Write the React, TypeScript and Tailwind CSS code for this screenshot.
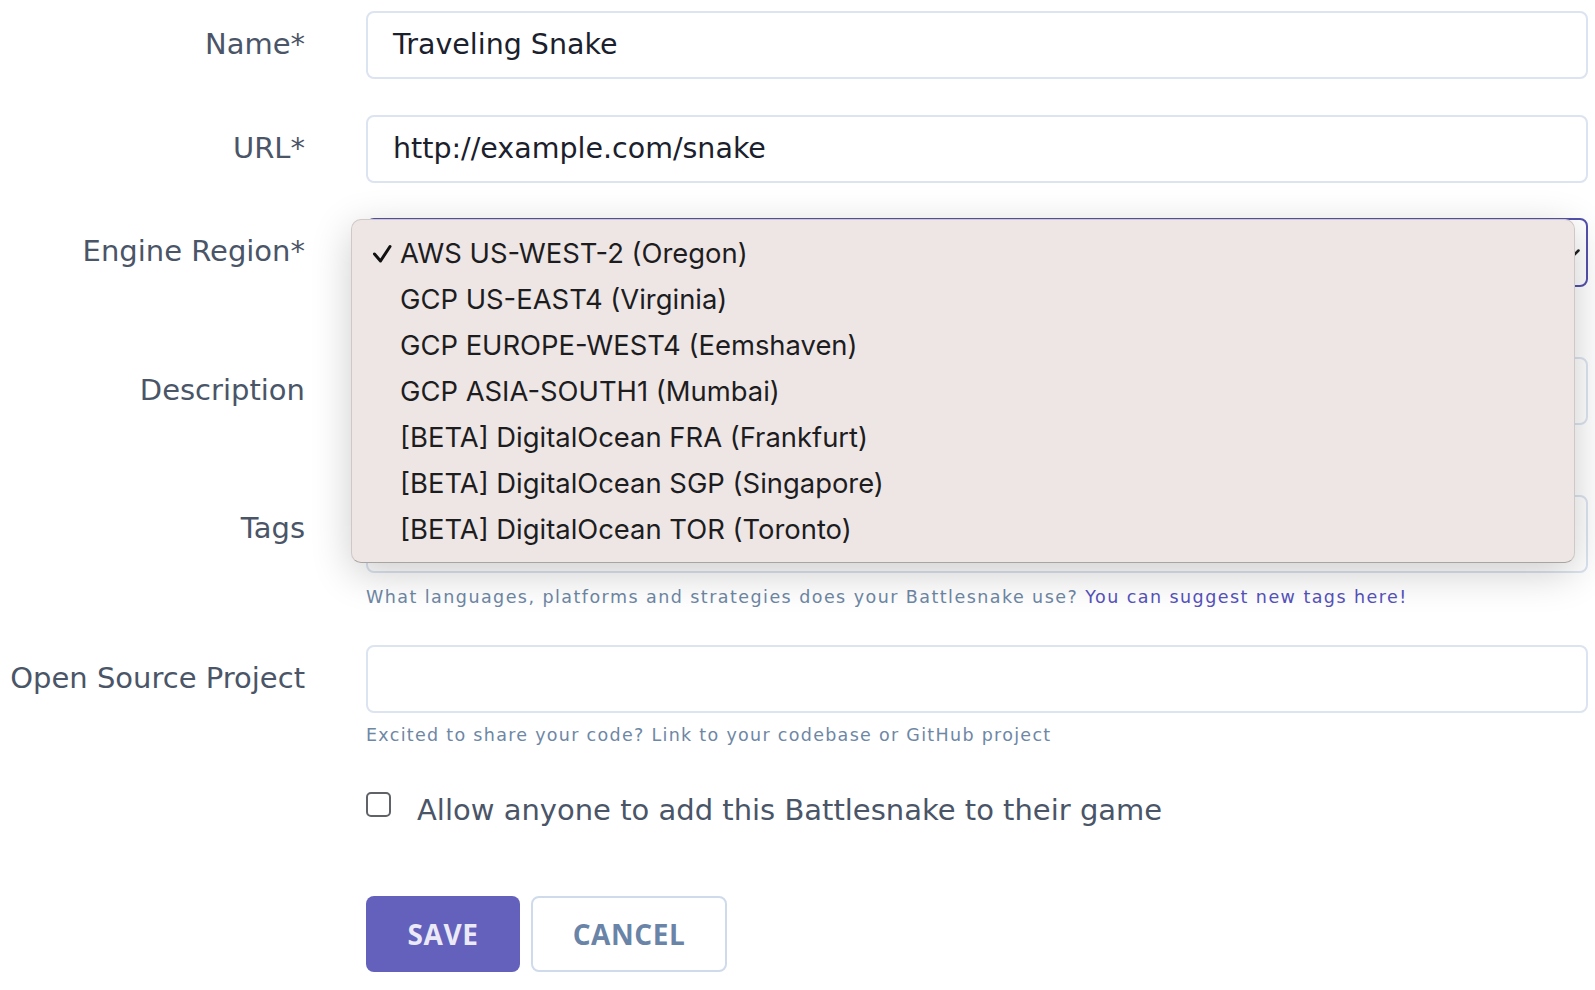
import React from "react";

const regions = [
  "AWS US-WEST-2 (Oregon)",
  "GCP US-EAST4 (Virginia)",
  "GCP EUROPE-WEST4 (Eemshaven)",
  "GCP ASIA-SOUTH1 (Mumbai)",
  "[BETA] DigitalOcean FRA (Frankfurt)",
  "[BETA] DigitalOcean SGP (Singapore)",
  "[BETA] DigitalOcean TOR (Toronto)",
];

const Row = ({ label, children, className = "" }: { label: string; children: React.ReactNode; className?: string }) => (
  <div className={`grid grid-cols-[305px_1fr] gap-x-[61px] ${className}`}>
    <div className="flex h-[68px] items-center justify-end text-[29px] text-[#4a5568]">{label}</div>
    <div>{children}</div>
  </div>
);

const TextField = ({ value = "", h = "h-[68px]" }: { value?: string; h?: string }) => (
  <div className={`flex ${h} items-center rounded-[8px] border-2 border-[#dbe4f0] bg-white px-[25px] text-[28.5px] text-[#1a202c]`}>
    {value}
  </div>
);

const RegionMenu = () => (
  <div className="absolute left-[-15px] right-[13px] top-[1px] z-10 rounded-[10px] border border-[#cfc8c7] border-b-[#a9a3a2] bg-[#eee6e5] pb-[9px] pt-[11px] font-['Inter','Liberation_Sans',sans-serif] text-[27.4px] text-[#1d1d1f] shadow-[0_10px_40px_rgba(0,0,0,0.2)]">
    {regions.map((r, i) => (
      <div key={r} className="flex h-[46px] items-center">
        <div className="flex w-[48px] justify-end pr-[8px]">
          {i === 0 && (
            <svg width="20" height="20" viewBox="0 0 20 20" fill="none">
              <path d="M2.5 10 L8.5 17 L18 2.5" stroke="#111" strokeWidth="3" strokeLinecap="round" strokeLinejoin="round" />
            </svg>
          )}
        </div>
        <span>{r}</span>
      </div>
    ))}
  </div>
);

export default function App() {
  return (
    <div className="min-h-screen bg-white pr-[7px] pt-[11px] font-['DejaVu_Sans','Open_Sans',sans-serif]">
      <Row label="Name*">
        <TextField value="Traveling Snake" />
      </Row>

      <Row label="URL*" className="mt-[36px]">
        <TextField value="http://example.com/snake" />
      </Row>

      <Row label="Engine Region*" className="mt-[35px]">
        <div className="relative">
          <div className="relative flex h-[69px] items-center rounded-[8px] border-2 border-[#5451ad] bg-white px-[25px] text-[28.5px] text-[#1a202c]">
            <svg className="absolute right-[6px] top-[29px]" width="16" height="10" viewBox="0 0 16 10" fill="none">
              <path d="M1.5 1.5 L8 8 L14.5 1.5" stroke="#222" strokeWidth="2.5" strokeLinecap="round" strokeLinejoin="round" />
            </svg>
          </div>
          <RegionMenu />
        </div>
      </Row>

      <Row label="Description" className="mt-[70px]">
        <TextField />
      </Row>

      <Row label="Tags" className="mt-[70px]">
        <TextField h="h-[78px]" />
        <p className="mt-[12px] text-[17.5px] leading-[24px] tracking-[1.45px] text-[#6e87a5]">
          What languages, platforms and strategies does your Battlesnake use?{" "}
          <a className="text-[#5552bd]">You can suggest new tags here!</a>
        </p>
      </Row>

      <Row label="Open Source Project" className="mt-[36px]">
        <TextField />
        <p className="mt-[10px] text-[17.5px] leading-[24px] tracking-[1.3px] text-[#6e87a5]">
          Excited to share your code? Link to your codebase or GitHub project
        </p>
      </Row>

      <div className="mt-[45px] grid grid-cols-[305px_1fr] gap-x-[61px]">
        <div />
        <label className="flex items-start gap-[26px]">
          <span className="h-[25px] w-[25px] shrink-0 rounded-[5px] border-2 border-[#5f6368] bg-white" />
          <span className="text-[29px] leading-[36px] text-[#4a5568]">Allow anyone to add this Battlesnake to their game</span>
        </label>
      </div>

      <div className="mt-[68px] grid grid-cols-[305px_1fr] gap-x-[61px]">
        <div />
        <div className="flex gap-[11px] font-['Open_Sans',sans-serif]">
          <button className="flex h-[76px] w-[154px] items-center justify-center rounded-[8px] bg-[#6361bb] text-[28px] font-bold tracking-[0.02em] text-[#ebe9f7]">
            SAVE
          </button>
          <button className="flex h-[76px] w-[196px] items-center justify-center rounded-[8px] border-2 border-[#cfdbea] bg-white text-[28px] font-bold tracking-[0.02em] text-[#6a84a8]">
            CANCEL
          </button>
        </div>
      </div>
    </div>
  );
}
